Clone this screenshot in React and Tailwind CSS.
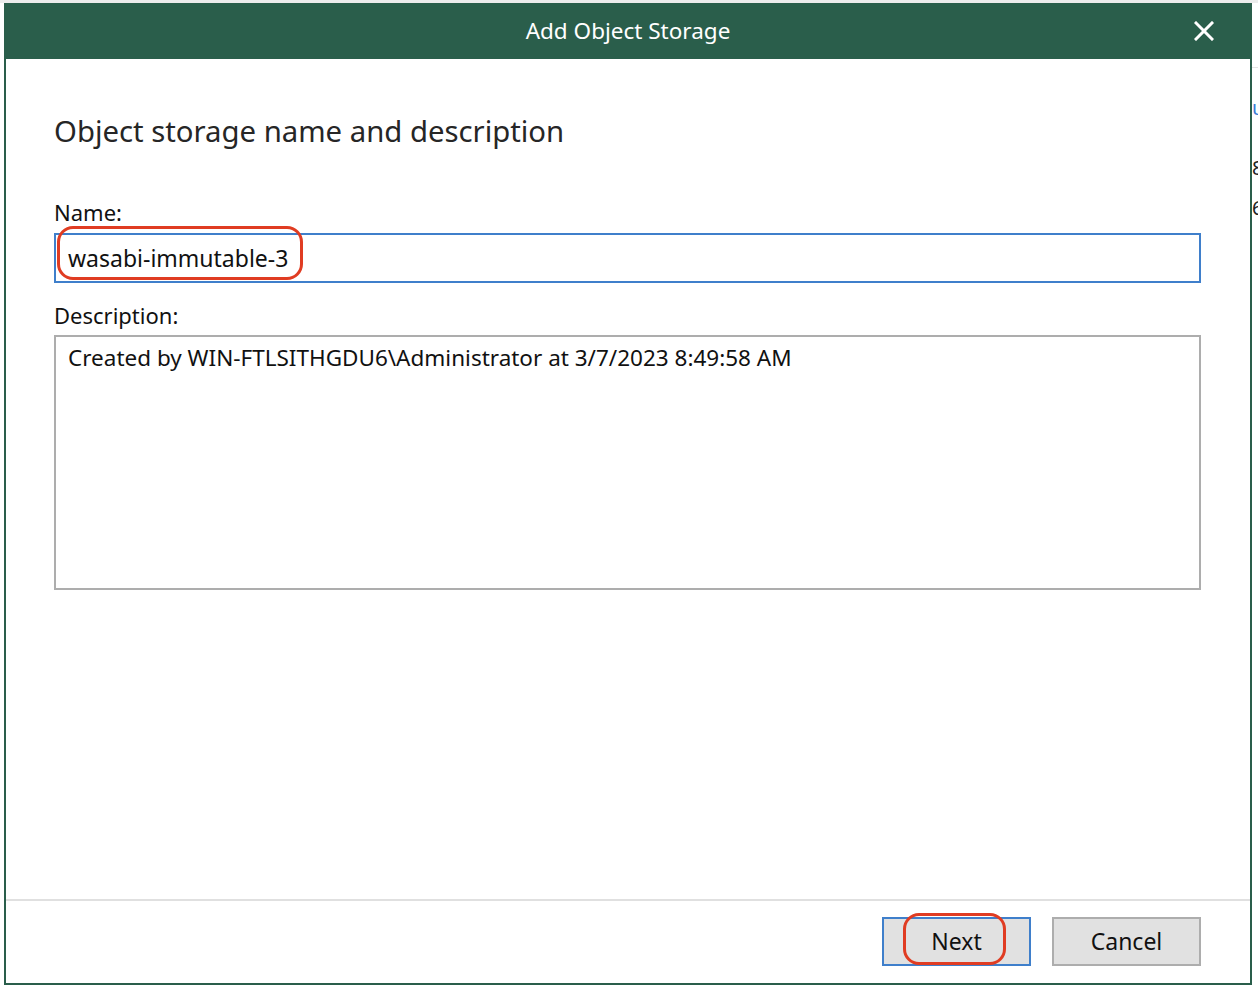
import React from 'react';

const font = { fontFamily: '"Noto Sans", "Open Sans", sans-serif' };

const CloseIcon = () => (
  <svg width="20" height="20" viewBox="0 0 20 20" fill="none" stroke="white" strokeWidth="3" strokeLinecap="square">
    <line x1="2" y1="2" x2="18" y2="18" />
    <line x1="18" y1="2" x2="2" y2="18" />
  </svg>
);

const Highlight = ({ className }) => (
  <div className={`absolute border-[3.5px] border-[#e03c22] rounded-[16px] pointer-events-none ${className}`} />
);

export default function App() {
  return (
    <div className="w-[1258px] h-[988px] bg-white overflow-hidden" style={font}>
      <div className="h-[3px] bg-[#ececec]" />
      <div className="flex">
        <div className="w-[4px] bg-white" />
        <div className="w-[1248px] h-[982px] flex flex-col border-x-2 border-b-2 border-[#2a5e4b] bg-white">
          {/* title bar */}
          <div className="relative h-[56px] -mx-[2px] bg-[#2a5e4b] flex items-center justify-center">
            <span className="text-white text-[22.5px] leading-none">Add Object Storage</span>
            <button className="absolute right-[38px] top-[18px]">
              <CloseIcon />
            </button>
          </div>

          {/* content */}
          <div className="flex-1 flex flex-col pl-[48px] pr-[49px] pt-[52px]">
            <h1 className="text-[29.3px] leading-[40px] text-[#262626]">Object storage name and description</h1>

            <label className="mt-[47px] text-[22px] leading-[28px] text-[#111]">Name:</label>
            <div className="relative mt-[7px] h-[50px] border-2 border-[#3f7fcb] flex items-center pl-[12px]">
              <span className="text-[23px] text-[#111]">wasabi-immutable-3</span>
              <Highlight className="left-[1px] -top-[9px] w-[246px] h-[54px]" />
            </div>

            <label className="mt-[18px] text-[22px] leading-[28px] text-[#111]">Description:</label>
            <div className="mt-[6px] h-[255px] border-2 border-[#adadad] pl-[12px] pt-[7px]">
              <p className="text-[22.5px] leading-[28px] text-[#111]">
                Created by WIN-FTLSITHGDU6\Administrator at 3/7/2023 8:49:58 AM
              </p>
            </div>
          </div>

          {/* footer */}
          <div className="h-[84px] border-t-2 border-[#e0e0e0] flex justify-end gap-[21px] pt-[16px] pr-[49px]">
            <div className="relative">
              <button className="w-[149px] h-[49px] bg-[#e1e1e1] border-2 border-[#3f7fcb] text-[23px] text-[#111]">
                Next
              </button>
              <Highlight className="left-[21px] -top-[4px] w-[103px] h-[52px]" />
            </div>
            <button className="w-[149px] h-[49px] bg-[#e1e1e1] border-2 border-[#adadad] text-[23px] text-[#111]">
              Cancel
            </button>
          </div>
        </div>
        <div className="w-[6px] flex flex-col text-[20px] leading-none">
          <div className="h-[65px] border-b border-[#e4e4e4]" />
          <span className="mt-[30px] text-[#3a7bd5]">u</span>
          <span className="mt-[40px] text-[#222]">8</span>
          <span className="mt-[20px] text-[#222]">6</span>
        </div>
      </div>
    </div>
  );
}
